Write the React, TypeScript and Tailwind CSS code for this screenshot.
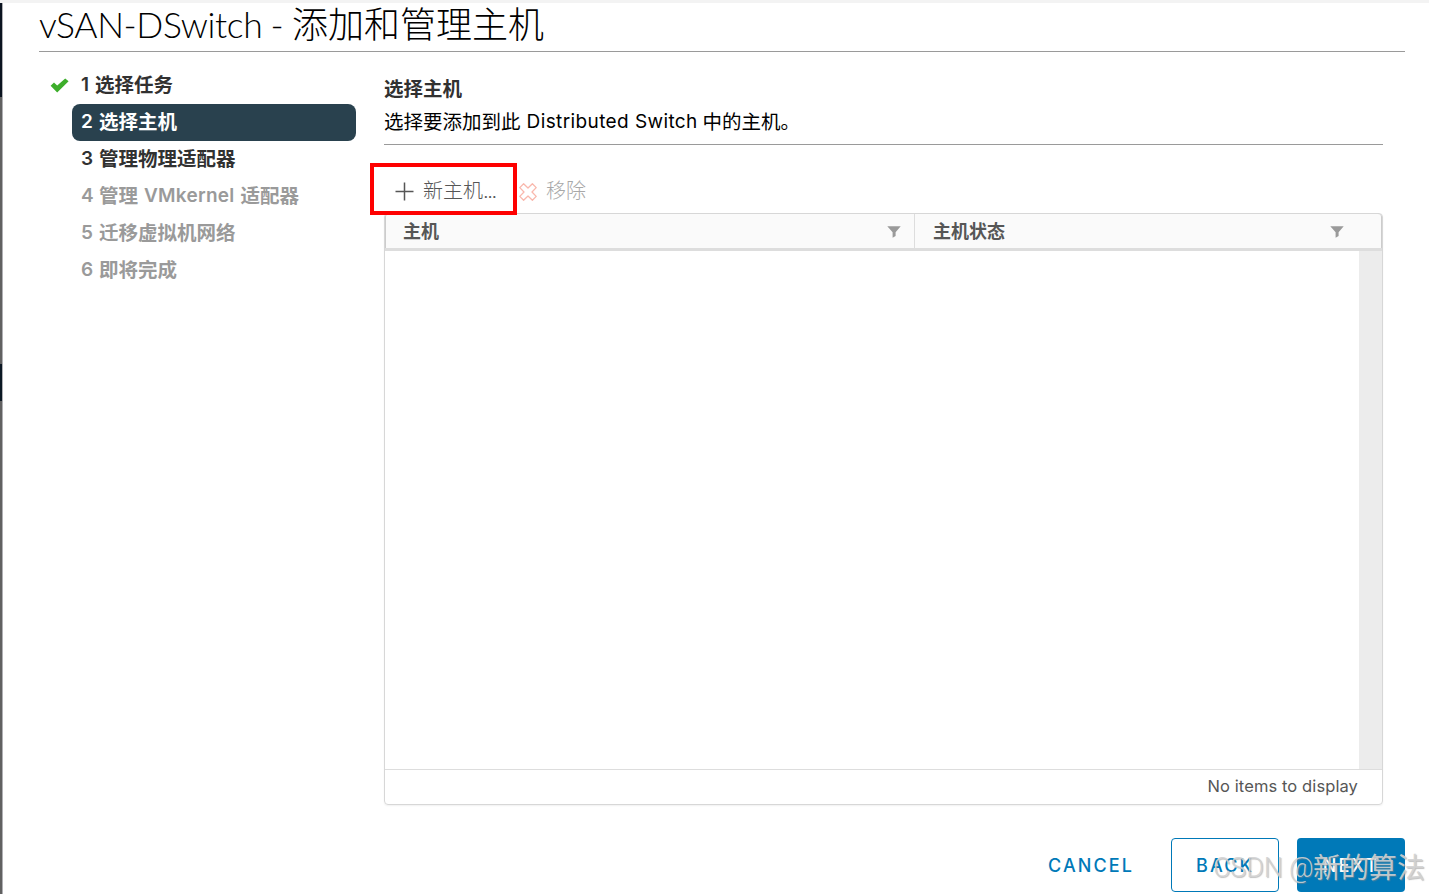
import clsx from 'clsx'

type StepState = 'done' | 'current' | 'available' | 'disabled'

type Step = {
  number: number
  before: string
  latin?: string
  after?: string
  state: StepState
}

const STEPS: Step[] = [
  { number: 1, before: '选择任务', state: 'done' },
  { number: 2, before: '选择主机', state: 'current' },
  { number: 3, before: '管理物理适配器', state: 'available' },
  { number: 4, before: '管理', latin: 'VMkernel', after: '适配器', state: 'disabled' },
  { number: 5, before: '迁移虚拟机网络', state: 'disabled' },
  { number: 6, before: '即将完成', state: 'disabled' },
]

function CheckIcon() {
  return (
    <svg width="19" height="15" viewBox="0 0 19 15">
      <path d="M0.6 7.8 L4 4.6 L7.2 7.6 L15.2 0.4 L18.6 3.2 L7.2 14.4 Z" fill="#3dae2b" />
    </svg>
  )
}

function FilterIcon() {
  return (
    <svg className="mt-[2px]" width="14" height="12" viewBox="0 0 14 12">
      <path d="M0.3 0.3 H13.7 L8.6 6.2 V10 L5.6 11.8 V6.2 Z" fill="#9a9a9a" />
    </svg>
  )
}

function PlusIcon() {
  return (
    <svg width="19" height="19" viewBox="0 0 19 19">
      <path d="M9.5 0.5 V18.5 M0.5 9.5 H18.5" stroke="#565656" strokeWidth="1.5" fill="none" />
    </svg>
  )
}

function RemoveIcon() {
  return (
    <svg className="mt-px" width="18" height="18" viewBox="0 0 18 18">
      <path
        d="M4.6 0.8 L9 5 L13.4 0.8 L17.2 4.6 L13 9 L17.2 13.4 L13.4 17.2 L9 13 L4.6 17.2 L0.8 13.4 L5 9 L0.8 4.6 Z"
        fill="none"
        stroke="#f9b8ad"
        strokeWidth="1.3"
        strokeLinejoin="round"
      />
    </svg>
  )
}

function StepItem({ step }: { step: Step }) {
  return (
    <li className="flex h-[37px] items-center">
      <span className="flex w-[34px] items-center pl-[12px]">{step.state === 'done' && <CheckIcon />}</span>
      <span
        className={clsx(
          'flex h-full w-[284px] items-center whitespace-pre rounded-lg pl-[9px] text-[19.5px] font-bold',
          step.state === 'current' && 'bg-[#29414e] text-white',
          (step.state === 'done' || step.state === 'available') && 'text-[#313131]',
          step.state === 'disabled' && 'text-[#9a9a9a]',
        )}
      >
        <span className={clsx('text-[19px] font-semibold', step.number === 1 ? 'w-[14px]' : 'w-[18px]')}>{step.number}</span>
        {step.before}
        {step.latin && <span className="mx-[6px] text-[19px] font-semibold tracking-[0.25px]">{step.latin}</span>}
        {step.after}
      </span>
    </li>
  )
}

function HostTable() {
  return (
    <div className="flex h-[592px] flex-col rounded-[4px] border border-[#d7d7d7] shadow-[0_1px_2px_rgba(0,0,0,0.06)]">
      <div className="flex h-[37px] shrink-0 rounded-t-[3px] border-b-[3px] border-[#dddddd] bg-[#fafafa] text-[18px] font-bold text-[#565656] shadow-[inset_1px_0_#ccc,inset_-1px_0_#ccc]">
        <div className="flex w-[530px] items-center justify-between border-r border-[#dddddd] pl-[18px] pr-[13px]">
          <span>主机</span>
          <FilterIcon />
        </div>
        <div className="flex flex-1 items-center justify-between pl-[18px] pr-[38px]">
          <span>主机状态</span>
          <FilterIcon />
        </div>
      </div>
      <div className="flex flex-1 justify-end">
        <div className="w-[23px] bg-[#ececec]" />
      </div>
      <div className="flex h-[35px] shrink-0 items-center justify-end border-t border-[#dddddd] pr-6 pb-[2px] text-[16.5px] tracking-[0.1px] text-[#565656]">
        No items to display
      </div>
    </div>
  )
}

export default function App() {
  return (
    <div className="relative h-[894px] w-[1429px] overflow-hidden border-t-[3px] border-[#f3f3f3] bg-white font-['Inter','Noto_Sans_CJK_SC',sans-serif]">
      <div className="flex h-full">
        <div className="flex w-[3px] shrink-0 flex-col border-r border-[#b0b0b4] bg-[#616161]">
          <div className="h-[94px] bg-[#0b1420]" />
          <div className="mt-[267px] h-[37px] bg-[#0b1824]" />
        </div>

        <div className="flex flex-1 flex-col pl-[35px] pr-6">
          <h1 className="ml-px flex h-[49px] shrink-0 items-center whitespace-pre border-b border-[#9a9a9a] pb-[4px] text-[36px] font-light text-black">
            <span className="w-[253px] font-['Lato'] text-[35.5px] tracking-[-0.4px]">
              vSAN-DSwitch<span className="ml-[-1px]"> -</span>
            </span>
            添加和管理主机
          </h1>

          <div className="flex pt-[15px]">
            <ol className="w-[346px] shrink-0">
              {STEPS.map((step) => (
                <StepItem key={step.number} step={step} />
              ))}
            </ol>

            <main className="w-[999px]">
              <h2 className="h-[38px] pt-[6px] text-[19.5px] leading-[32px] font-bold text-[#313131]">选择主机</h2>
              <p className="flex h-[40px] items-start border-b border-[#9a9a9a] pt-px text-[19.5px] leading-[32px] text-black">
                选择要添加到此
                <span className="mx-[6px] w-[170px] text-[19px] tracking-[0.4px] whitespace-nowrap">Distributed Switch</span>
                中的主机。
              </p>

              <div className="relative flex h-[68px] items-center pt-[24px] text-[20px] text-[#565656]">
                <button className="flex items-center pl-[11px]">
                  <PlusIcon />
                  <span className="ml-[9px] w-[73px] text-left whitespace-nowrap font-light">
                    新主机<span className="tracking-[-1.4px]">...</span>
                  </span>
                </button>
                <button className="ml-[23px] flex items-center font-light text-[#a8a8a8]">
                  <RemoveIcon />
                  <span className="ml-[9px]">移除</span>
                </button>
                <div className="pointer-events-none absolute top-[18px] left-[-14px] z-10 h-[52px] w-[147px] border-4 border-[#fe0000]" />
              </div>

              <HostTable />
            </main>
          </div>

          <footer className="mt-[33px] flex h-[54px] shrink-0 items-center justify-end text-[18px] font-medium tracking-[2.1px] text-[#0079b8]">
            <button className="mr-[37px]">CANCEL</button>
            <button className="mr-[18px] h-full w-[108px] rounded-[4px] border border-[#0079b8]">BACK</button>
            <button className="h-full w-[108px] rounded-[4px] bg-[#0079b8] text-white">NEXT</button>
          </footer>
        </div>
      </div>

      <div className="absolute top-[847px] left-[1213px] flex items-center leading-[36px] whitespace-pre text-[#d2d2d2]/90 [text-shadow:1px_1px_1px_#8888]">
        <span className="w-[100px] font-['Roboto'] text-[27px] font-light tracking-[-0.2px]">CSDN @</span>
        <span className="text-[28px]">新的算法</span>
      </div>
    </div>
  )
}
